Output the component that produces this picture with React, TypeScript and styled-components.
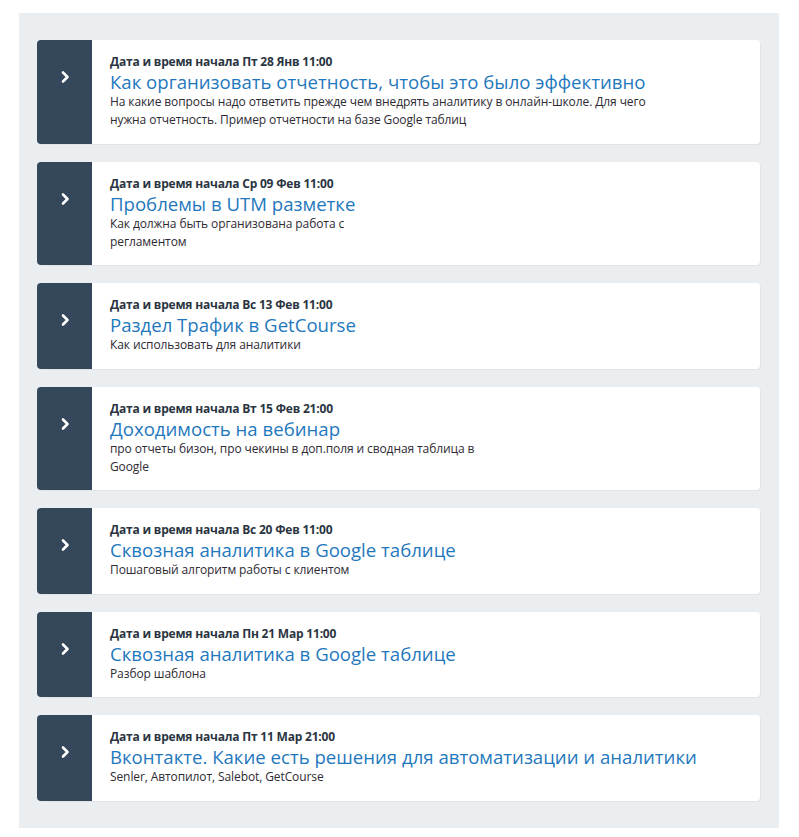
import React from "react";
import styled, { createGlobalStyle } from "styled-components";

const Global = createGlobalStyle`
  html, body { margin: 0; padding: 0; background: #fff; }
  body { font-family: "Open Sans", "Liberation Sans", sans-serif; }
`;

const Page = styled.div`
  padding: 13px 20px 10px 19px;
`;

const Panel = styled.div`
  background: #ebeef0;
  padding: 27px 19px 27px 18px;
  display: flex;
  flex-direction: column;
  gap: 18px;
`;

const Card = styled.div`
  display: flex;
  background: #fff;
  border-radius: 4px;
  box-shadow: 1px 1px 0 rgba(0, 0, 0, 0.04);
`;

const Side = styled.div`
  width: 55px;
  flex-shrink: 0;
  background: #34475b;
  border-radius: 4px 0 0 4px;
  display: flex;
  justify-content: center;
  align-items: flex-start;
  padding-top: 30px;
  box-sizing: border-box;
`;

const Body = styled.div`
  flex: 1;
  padding: 14px 18px 14.5px 18px;
`;

const DateLine = styled.div`
  font-size: 12px;
  font-weight: 700;
  color: #2b3542;
  line-height: 16px;
  letter-spacing: -0.2px;
`;

const Title = styled.div`
  font-size: 18.6px;
  color: #1f78bd;
  line-height: 23px;
`;

const Desc = styled.div`
  font-size: 12px;
  color: #2e2a33;
  line-height: 18px;
  letter-spacing: -0.1px;
`;

const Chevron = () => (
  <svg width="12" height="14" viewBox="0 0 12 14">
    <path d="M4 2.5 L8.5 7 L4 11.5" fill="none" stroke="#fff" strokeWidth="2.6" strokeLinecap="round" strokeLinejoin="round" />
  </svg>
);

const items: { date: string; title: string; desc: string[] }[] = [
  {
    date: "Дата и время начала Пт 28 Янв 11:00",
    title: "Как организовать отчетность, чтобы это было эффективно",
    desc: [
      "На какие вопросы надо ответить прежде чем внедрять аналитику в онлайн-школе. Для чего",
      "нужна отчетность. Пример отчетности на базе Google таблиц",
    ],
  },
  {
    date: "Дата и время начала Ср 09 Фев 11:00",
    title: "Проблемы в UTM разметке",
    desc: ["Как должна быть организована работа с", "регламентом"],
  },
  {
    date: "Дата и время начала Вс 13 Фев 11:00",
    title: "Раздел Трафик в GetCourse",
    desc: ["Как использовать для аналитики"],
  },
  {
    date: "Дата и время начала Вт 15 Фев 21:00",
    title: "Доходимость на вебинар",
    desc: ["про отчеты бизон, про чекины в доп.поля и сводная таблица в", "Google"],
  },
  {
    date: "Дата и время начала Вс 20 Фев 11:00",
    title: "Сквозная аналитика в Google таблице",
    desc: ["Пошаговый алгоритм работы с клиентом"],
  },
  {
    date: "Дата и время начала Пн 21 Мар 11:00",
    title: "Сквозная аналитика в Google таблице",
    desc: ["Разбор шаблона"],
  },
  {
    date: "Дата и время начала Пт 11 Мар 21:00",
    title: "Вконтакте. Какие есть решения для автоматизации и аналитики",
    desc: ["Senler, Автопилот, Salebot, GetCourse"],
  },
];

export default function App() {
  return (
    <Page>
      <Global />
      <Panel>
        {items.map((it, i) => (
          <Card key={i}>
            <Side>
              <Chevron />
            </Side>
            <Body>
              <DateLine>{it.date}</DateLine>
              <Title>{it.title}</Title>
              {it.desc.map((d, j) => (
                <Desc key={j}>{d}</Desc>
              ))}
            </Body>
          </Card>
        ))}
      </Panel>
    </Page>
  );
}
